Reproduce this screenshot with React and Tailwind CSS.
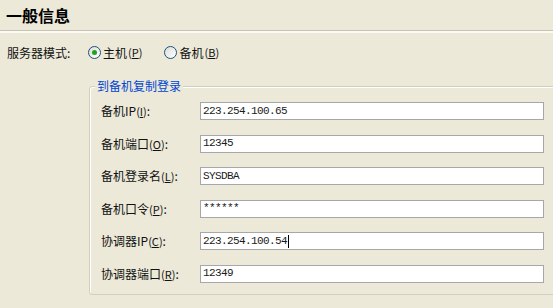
const cjk = { fontFamily: '"Noto Sans CJK SC", "Liberation Sans", sans-serif' };
const mono = { fontFamily: '"Liberation Mono", "Noto Sans CJK SC", monospace' };

const Key = ({ k }) => (
  <span className="text-[11px]">
    (<span className="underline">{k}</span>)
  </span>
);

const Radio = ({ checked, label, k }) => (
  <div className="flex items-center gap-[1px]">
    <span className="w-[13px] h-[13px] rounded-full border border-[#1C5180] bg-gradient-to-br from-[#DCDCD7] to-white flex items-center justify-center">
      {checked && <span className="w-[5px] h-[5px] rounded-full bg-[#21A121]" />}
    </span>
    <span className="ml-[1px]">{label}</span>
    <Key k={k} />
  </div>
);

const fields = [
  { label: '备机IP', k: 'I', value: '223.254.100.65' },
  { label: '备机端口', k: 'O', value: '12345' },
  { label: '备机登录名', k: 'L', value: 'SYSDBA' },
  { label: '备机口令', k: 'P', value: '******' },
  { label: '协调器IP', k: 'C', value: '223.254.100.54', caret: true },
  { label: '协调器端口', k: 'R', value: '12349' },
];

const Field = ({ label, k, value, caret }) => (
  <div className="flex items-center h-[18px]">
    <div className="w-[110px] pl-[11px] text-[12px] text-[#111]">
      {label}
      <Key k={k} />
      <span>:</span>
    </div>
    <div
      className="w-[344px] h-[18px] bg-white border border-[#A7A6AA] flex items-center pl-[2px] text-[11px] tracking-[-0.6px] text-[#1a1a1a]"
      style={mono}
    >
      {value}
      {caret && <span className="inline-block ml-[1px] w-[1px] h-[13px] bg-black" />}
    </div>
  </div>
);

export default function App() {
  return (
    <div className="w-[553px] h-[308px] bg-[#ECE9D8] overflow-hidden text-[12px] text-[#111]" style={cjk}>
      <div className="pl-[6px] pt-[4px] h-[30px] text-[16px] font-bold leading-[22px] text-black">一般信息</div>
      <div className="border-t border-[#C7C4B6] border-b-2 border-b-[#FBFAF5]" />
      <div className="flex items-center h-[33px] mt-[3px] pl-[7px]">
        <span className="w-[81px]">服务器模式:</span>
        <Radio checked label="主机" k="P" />
        <div className="ml-[22px]">
          <Radio label="备机" k="B" />
        </div>
      </div>
      <div className="relative ml-[89px] mt-[17px] w-[480px] h-[209px] border border-[#D0D0BF] rounded-[3px] shadow-[inset_1px_1px_0_#FFFFFF]">
        <span className="absolute -top-[9px] left-[5px] px-[2px] bg-[#ECE9D8] text-[#0046D5] leading-[16px]">
          到备机复制登录
        </span>
        <div className="flex flex-col gap-[14.5px] pt-[15px]">
          {fields.map((f) => (
            <Field key={f.label} {...f} />
          ))}
        </div>
      </div>
    </div>
  );
}
